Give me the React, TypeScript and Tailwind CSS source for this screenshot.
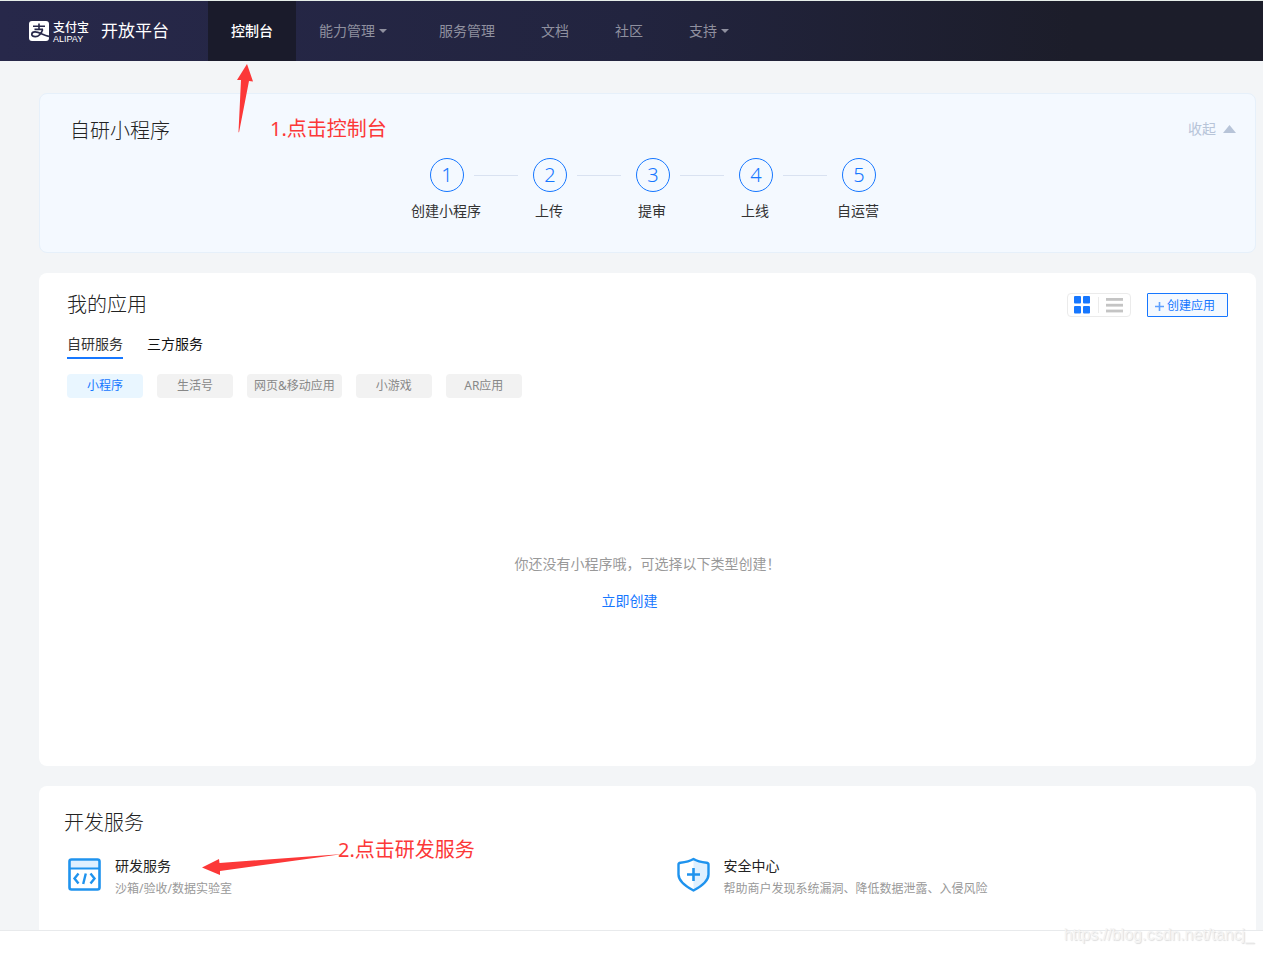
import { useState } from 'react';

type NavItem = { label: string; caret?: boolean };

const NAV_ITEMS: NavItem[] = [
  { label: '控制台' },
  { label: '能力管理', caret: true },
  { label: '服务管理' },
  { label: '文档' },
  { label: '社区' },
  { label: '支持', caret: true },
];

const STEPS = ['创建小程序', '上传', '提审', '上线', '自运营'];
const TABS = ['自研服务', '三方服务'];
const APP_TYPES = ['小程序', '生活号', '网页&移动应用', '小游戏', 'AR应用'];

const AlipayMark = () => (
  <svg className="h-5 w-5 shrink-0" viewBox="0 0 20 20" fill="none" aria-hidden="true">
    <rect width="20" height="20" rx="3" fill="#fff" />
    <path d="M4 5.300h12M10 2.500v5.700M5.500 8.400h8.500" stroke="#27284a" strokeWidth="1.600" />
    <path
      d="M13.700 8.400c-1.200 3.600-4 7.100-7.300 7.300-2.300.1-3.700-1-3.600-2.500.1-1.500 1.600-2.400 3.400-2.300 3.600.2 7 2.500 13.800 4.600"
      stroke="#27284a"
      strokeWidth="1.700"
    />
  </svg>
);

const CodeWindowIcon = () => (
  <svg className="h-9 w-9 shrink-0" viewBox="0 0 36 36" fill="none" aria-hidden="true">
    <rect x="2.500" y="3.500" width="30" height="30" rx="2" fill="#fff" stroke="#1f93ee" strokeWidth="2.600" />
    <path d="M4 5h27v7H4z" fill="#dff0ff" />
    <path d="M3 12.500h29" stroke="#1f93ee" strokeWidth="2" />
    <path
      d="M11.500 17.500 7.500 22.500l4 5M23.500 17.500l4 5-4 5M18.800 17.500 16.200 28"
      stroke="#1f93ee"
      strokeWidth="2.400"
    />
  </svg>
);

const ShieldIcon = () => (
  <svg className="h-9 w-9 shrink-0" viewBox="0 0 36 36" fill="none" aria-hidden="true">
    <path d="M17.500 3.500 32 7v12c0 6-5 11-14.500 15.500z" fill="#dff0ff" />
    <path
      d="M17.500 3C13.500 5.500 8.500 6.300 4.500 6.700 3.200 6.900 2.500 7.500 2.500 8.500v10C2.500 25 8 29.500 17.500 34.500 27 29.500 32.500 25 32.500 18.500v-10c0-1-.7-1.600-2-1.800C26.500 6.300 21.500 5.500 17.500 3Z"
      stroke="#1f93ee"
      strokeWidth="2.400"
      strokeLinejoin="round"
    />
    <path d="M17.500 12v13M11 18.500h13" stroke="#1f93ee" strokeWidth="2.600" />
  </svg>
);

const SERVICES = [
  { title: '研发服务', desc: '沙箱/验收/数据实验室', Icon: CodeWindowIcon },
  { title: '安全中心', desc: '帮助商户发现系统漏洞、降低数据泄露、入侵风险', Icon: ShieldIcon },
];

function Header() {
  return (
    <header className="flex h-[61px] border-t border-[#e6eee9] bg-linear-to-r from-[#27284a] via-[#22243f] via-50% to-[#1c1d2a] to-85%">
      <a href="#" className="flex w-52 shrink-0 items-center pl-[29px] text-white">
        <AlipayMark />
        <span className="ml-1 flex flex-col pt-0.5">
          <span className="text-[12px] leading-[14px] font-medium">支付宝</span>
          <span className="font-['Liberation_Sans',sans-serif] text-[9px] leading-2">ALIPAY</span>
        </span>
        <span className="ml-3 text-[17px] leading-6">开放平台</span>
      </a>
      <nav className="flex text-sm">
        {NAV_ITEMS.map((item, i) => (
          <a
            key={item.label}
            href="#"
            className={
              i === 0
                ? 'flex items-center bg-[#1a1b2b] px-[23px] font-medium text-white'
                : 'flex items-center px-[23px] text-[#8f909f] hover:text-white'
            }
          >
            {item.label}
            {item.caret && (
              <svg className="mr-1.5 ml-1 h-1 w-2" viewBox="0 0 8 4" aria-hidden="true">
                <path d="M0 0h8L4 4z" fill="currentColor" />
              </svg>
            )}
          </a>
        ))}
      </nav>
    </header>
  );
}

function GuideCard() {
  return (
    <section className="relative h-40 rounded-lg border border-[#e6f0fa] bg-[#f4f9ff] pt-[23px]">
      <div className="flex items-start justify-between pr-[19px] pl-[30px]">
        <h2 className="text-xl leading-7 font-light text-[#222]">自研小程序</h2>
        <button type="button" className="flex items-center gap-[7px] pt-0.5 text-sm text-[#b7c4d8]">
          收起
          <svg className="h-2 w-[13px]" viewBox="0 0 13 8" aria-hidden="true">
            <path d="M6.500 0 13 8H0z" fill="#b7c4d8" />
          </svg>
        </button>
      </div>
      <ol className="mt-[13px] flex justify-center pl-[11px]">
        {STEPS.map((step, i) => (
          <li key={step} className="flex">
            {i > 0 && <span className="mt-[17px] mr-[15px] ml-2.5 h-px w-11 bg-[#d9e2f1]" />}
            <div className="flex w-[34px] flex-col items-center">
              <span className="flex h-[34px] w-[34px] shrink-0 items-center justify-center rounded-full border border-[#1677ff] text-xl leading-none font-light text-[#1677ff]">
                {i + 1}
              </span>
              <span className="mt-[9px] pr-0.5 text-sm whitespace-nowrap text-[#333]">{step}</span>
            </div>
          </li>
        ))}
      </ol>
      {/* hand-drawn hint pointing at the console tab */}
      <svg className="absolute -top-[33px] left-[190px] h-[76px] w-8" viewBox="0 0 32 76" aria-hidden="true">
        <path d="M17 3 23 20.500 19 20 9 71.500 8.500 71 11 19 7 19z" fill="#fc3838" />
      </svg>
      <p className="absolute top-[21px] left-[230px] text-xl leading-7 text-[#fc3838]">1.点击控制台</p>
    </section>
  );
}

function AppsCard() {
  const [tab, setTab] = useState(TABS[0]);
  const [appType, setAppType] = useState(APP_TYPES[0]);

  return (
    <section className="flex min-h-[493px] flex-col rounded-lg bg-white px-7 pt-[18px]">
      <div className="flex items-center justify-between">
        <h2 className="text-xl leading-7 font-light text-[#222]">我的应用</h2>
        <div className="flex items-center gap-4">
          <div className="flex h-6 w-16 items-center rounded border border-[#ebebeb]">
            <button type="button" aria-label="卡片视图" className="flex w-[30px] justify-center pr-0.5">
              <svg className="h-[18px] w-4" viewBox="0 0 16 18" fill="#1677ff" aria-hidden="true">
                <rect y="0" width="7" height="7.500" rx="1" />
                <rect x="9" y="0" width="7" height="7.500" rx="1" />
                <rect y="10" width="7" height="7.500" rx="1" />
                <rect x="9" y="10" width="7" height="7.500" rx="1" />
              </svg>
            </button>
            <span className="h-4 w-px bg-[#ebebeb]" />
            <button type="button" aria-label="列表视图" className="flex flex-1 justify-center">
              <svg className="h-4 w-[17px]" viewBox="0 0 17 16" fill="#c4c4c4" aria-hidden="true">
                <rect y="1" width="17" height="2.800" />
                <rect y="6.800" width="17" height="2.800" />
                <rect y="12.600" width="17" height="2.800" />
              </svg>
            </button>
          </div>
          <button
            type="button"
            className="flex h-6 w-[81px] items-center gap-[3px] rounded-[1px] border border-[#1677ff] bg-[#f4f9ff] pt-0.5 pl-[7px] text-xs text-[#1677ff]"
          >
            <svg className="h-[9px] w-[9px]" viewBox="0 0 9 9" aria-hidden="true">
              <path d="M4.500 0v9M0 4.500h9" stroke="#5da0ff" strokeWidth="1.600" />
            </svg>
            创建应用
          </button>
        </div>
      </div>

      <div className="mt-3 flex gap-6 text-sm">
        {TABS.map((name) => (
          <button
            key={name}
            type="button"
            onClick={() => setTab(name)}
            className={
              name === tab
                ? 'h-7 border-b-2 border-[#1677ff] text-[#333]'
                : 'h-7 border-b-2 border-transparent text-[#111]'
            }
          >
            {name}
          </button>
        ))}
      </div>

      <div className="mt-[15px] flex gap-3.5 text-xs">
        {APP_TYPES.map((name) => (
          <button
            key={name}
            type="button"
            onClick={() => setAppType(name)}
            className={
              name === appType
                ? 'h-6 min-w-[76px] rounded px-[7px] bg-[#e9f6ff] text-[#1677ff]'
                : 'h-6 min-w-[76px] rounded px-[7px] bg-[#f2f2f2] text-[#888]'
            }
          >
            {name}
          </button>
        ))}
      </div>

      <div className="mt-[156px] flex flex-col items-center text-sm">
        <p className="text-[#999]">你还没有小程序哦，可选择以下类型创建！</p>
        <a href="#" className="mt-[17px] mr-9 text-[#1677ff]">立即创建</a>
      </div>
    </section>
  );
}

function ServicesCard() {
  return (
    <section className="relative h-36 rounded-t-lg bg-white pt-[23px]">
      <h2 className="pl-[25px] text-xl leading-7 font-light text-[#222]">开发服务</h2>
      <ul className="mt-[19px] grid grid-cols-2">
        {SERVICES.map(({ title, desc, Icon }) => (
          <li key={title}>
            <a href="#" className="flex pl-7">
              <Icon />
              <span className="ml-3 flex flex-col">
                <span className="text-sm text-[#222]">{title}</span>
                <span className="mt-[5px] text-xs text-[#999]">{desc}</span>
              </span>
            </a>
          </li>
        ))}
      </ul>
      <svg className="absolute top-[60px] left-[160px] h-8 w-[150px]" viewBox="0 0 150 32" aria-hidden="true">
        <path d="M3 21.500 20 13 20.500 17 144 8 21 25 21 29z" fill="#fc3838" />
      </svg>
      <p className="absolute top-[50px] left-[299px] text-xl leading-7 text-[#fc3838]">2.点击研发服务</p>
    </section>
  );
}

export default function App() {
  return (
    <div className="bg-white font-['Noto_Sans','Noto_Sans_CJK_SC',sans-serif]">
      <Header />
      <main className="flex flex-col gap-5 border-b border-[#e8eaec] bg-[#f3f5f7] pt-8 pr-[7px] pl-[39px]">
        <GuideCard />
        <AppsCard />
        <ServicesCard />
      </main>
      <footer className="relative h-[22px]">
        <p className="absolute -top-2 right-[9px] font-['Liberation_Sans',sans-serif] text-base leading-6 text-[#f4f4f4] [text-shadow:1px_1px_1px_#dcdcdc]">
          https://blog.csdn.net/tancj_
        </p>
      </footer>
    </div>
  );
}
